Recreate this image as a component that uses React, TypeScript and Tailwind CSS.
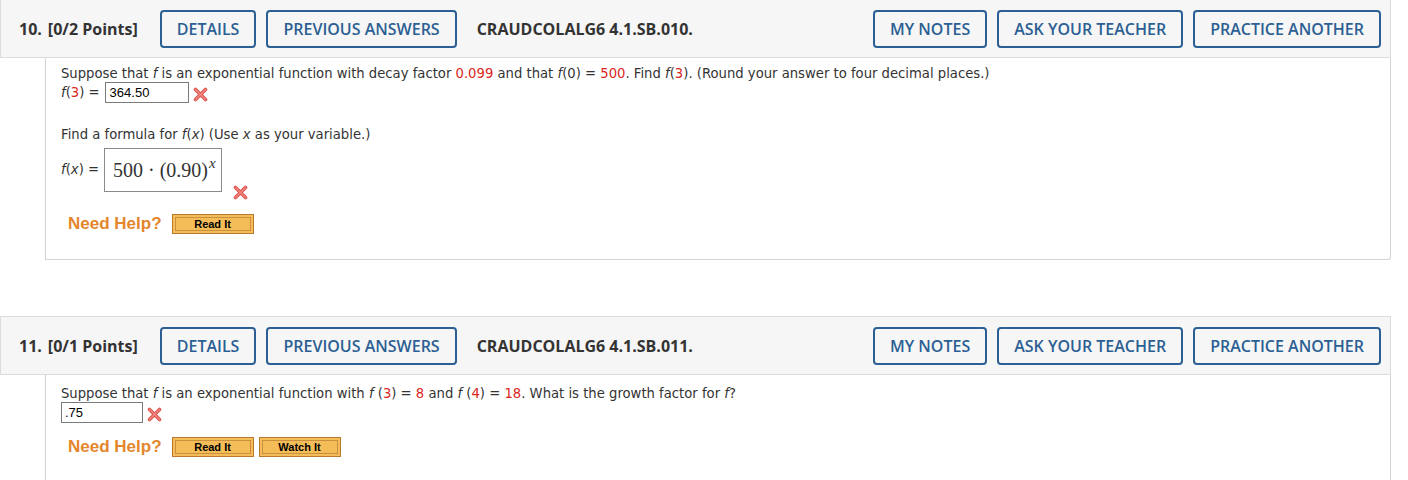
import React from "react";

const headerFont = { fontFamily: '"Open Sans", "Liberation Sans", sans-serif' };
const bodyFont = { fontFamily: '"DejaVu Sans", Verdana, sans-serif' };

const RedX = () => (
  <svg width="15" height="15" viewBox="0 0 15 15" className="inline-block">
    <path d="M2.5 2.5 L12.5 12.5 M12.5 2.5 L2.5 12.5" stroke="#e0574f" strokeWidth="3.6" strokeLinecap="round" />
    <path d="M2.5 2.5 L12.5 12.5 M12.5 2.5 L2.5 12.5" stroke="#f08a84" strokeWidth="1.2" strokeLinecap="round" />
  </svg>
);

const OrangeButton = ({ label }: { label: string }) => (
  <span className="inline-flex h-[20px] w-[82px] items-center justify-center border border-[#b8792f] bg-[#f4bd58] p-[2px]">
    <span
      className="flex h-full w-full items-center justify-center border border-[#c9913f] text-[11px] font-bold text-black"
      style={{ fontFamily: '"Liberation Sans", Arial, sans-serif' }}
    >
      {label}
    </span>
  </span>
);

const NeedHelp = ({ buttons }: { buttons: string[] }) => (
  <div className="ml-[7px] flex items-center gap-[5px]">
    <span
      className="mr-[5px] text-[17px] font-bold text-[#e4862c]"
      style={{ fontFamily: '"Liberation Sans", Arial, sans-serif' }}
    >
      Need Help?
    </span>
    {buttons.map((b) => (
      <OrangeButton key={b} label={b} />
    ))}
  </div>
);

const BlueButton = ({ label }: { label: string }) => (
  <span className="flex h-[38px] items-center rounded-[4px] border-2 border-[#2c5f93] px-[15px] text-[16px] font-semibold text-[#2c5f93]">
    {label}
  </span>
);

interface HeaderProps {
  num: string;
  points: string;
  code: string;
}

const QuestionHeader = ({ num, points, code }: HeaderProps) => (
  <div
    className="flex h-[59px] items-center border border-[#dcdcdc] bg-[#f6f6f6] pl-[18px] pr-[9px] text-[#333]"
    style={headerFont}
  >
    <span className="text-[16px] font-bold">{num}</span>
    <span className="ml-[6px] text-[16px] font-bold">{points}</span>
    <div className="ml-[22px] flex gap-[10px]">
      <BlueButton label="DETAILS" />
      <BlueButton label="PREVIOUS ANSWERS" />
    </div>
    <span className="ml-[20px] text-[16px] font-bold">{code}</span>
    <div className="ml-auto flex gap-[10px]">
      <BlueButton label="MY NOTES" />
      <BlueButton label="ASK YOUR TEACHER" />
      <BlueButton label="PRACTICE ANOTHER" />
    </div>
  </div>
);

const Red = ({ children }: { children: React.ReactNode }) => (
  <span className="text-[#d9261c]">{children}</span>
);

export default function App() {
  return (
    <div className="h-[480px] w-[1408px] overflow-hidden bg-white">
      <div className="mr-[17px] -mt-[1px]">
        <QuestionHeader num="10." points="[0/2 Points]" code="CRAUDCOLALG6 4.1.SB.010." />
        <div
          className="ml-[45px] h-[202px] rounded-br-[3px] border-x border-b border-[#d4d4d4] pl-[15px] pt-[7px] text-[13.2px] text-[#333]"
          style={bodyFont}
        >
          <p className="leading-[17px]">
            Suppose that <i>f</i> is an exponential function with decay factor <Red>0.099</Red> and that{" "}
            <i>f</i>(0) = <Red>500</Red>. Find <i>f</i>(<Red>3</Red>). (Round your answer to four decimal places.)
          </p>
          <div className="flex items-center">
            <span>
              <i>f</i>(<Red>3</Red>) =
            </span>
            <span
              className="ml-[5px] flex h-[21px] w-[84px] items-center border border-[#7a7a7a] pl-[4px] text-[13px] text-black"
              style={{ fontFamily: '"Liberation Sans", Arial, sans-serif' }}
            >
              364.50
            </span>
            <span className="ml-[4px] mt-[4px] flex">
              <RedX />
            </span>
          </div>
          <p className="mt-[23px] leading-[17px]">
            Find a formula for <i>f</i>(<i>x</i>) (Use <i>x</i> as your variable.)
          </p>
          <div className="mt-[5px] flex items-end">
            <span className="mb-[12px]">
              <i>f</i>(<i>x</i>) =
            </span>
            <span
              className="ml-[5px] flex h-[44px] w-[118px] items-center border border-[#8a8a8a] pl-[8px] text-[20px] text-[#333]"
              style={{ fontFamily: '"Liberation Serif", "Times New Roman", serif' }}
            >
              500 · (0.90)<span className="-mt-[14px] ml-[1px] text-[15px] italic">x</span>
            </span>
            <span className="-mb-[8px] ml-[11px] flex">
              <RedX />
            </span>
          </div>
          <div className="mt-[19px]">
            <NeedHelp buttons={["Read It"]} />
          </div>
        </div>
      </div>

      <div className="mr-[17px] mt-[56px]">
        <QuestionHeader num="11." points="[0/1 Points]" code="CRAUDCOLALG6 4.1.SB.011." />
        <div
          className="ml-[45px] h-[200px] border-x border-[#d4d4d4] pl-[15px] pt-[10px] text-[13.2px] text-[#333]"
          style={bodyFont}
        >
          <p className="leading-[17px]">
            Suppose that <i>f</i> is an exponential function with <i>f</i> (<Red>3</Red>) = <Red>8</Red> and{" "}
            <i>f</i> (<Red>4</Red>) = <Red>18</Red>. What is the growth factor for <i>f</i>?
          </p>
          <div className="flex items-center">
            <span
              className="flex h-[21px] w-[82px] items-center border border-[#7a7a7a] pl-[3px] text-[13px] text-black"
              style={{ fontFamily: '"Liberation Sans", Arial, sans-serif' }}
            >
              .75
            </span>
            <span className="ml-[4px] mt-[4px] flex">
              <RedX />
            </span>
          </div>
          <div className="mt-[11px]">
            <NeedHelp buttons={["Read It", "Watch It"]} />
          </div>
        </div>
      </div>
    </div>
  );
}
